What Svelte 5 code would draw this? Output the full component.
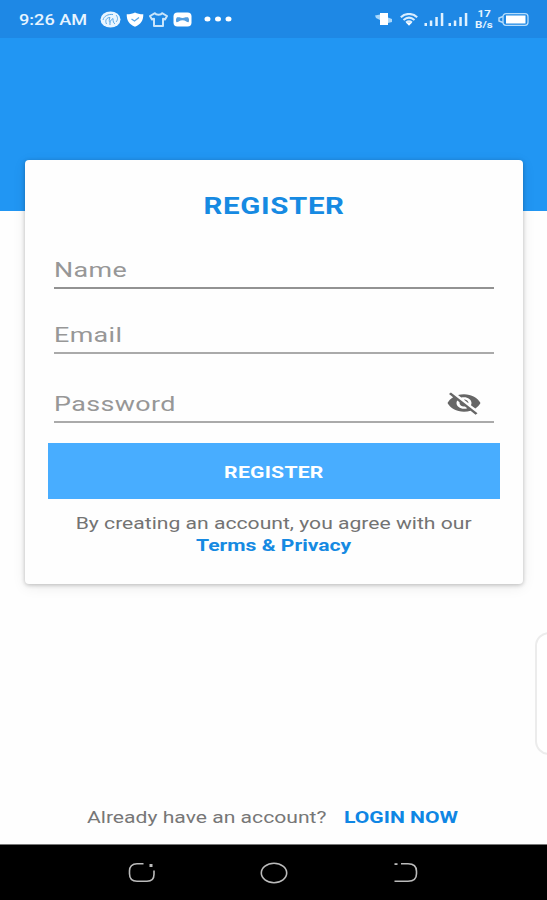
<script lang="ts">
  let name = $state('');
  let email = $state('');
  let password = $state('');
  let showPassword = $state(false);
</script>

<div class="screen">
  <header class="status-bar">
    <div class="status-left">
      <span class="wide time">9:26 AM</span>
      <svg class="swirl" width="21" height="17" viewBox="0 0 21 17">
        <ellipse cx="10.5" cy="8.5" rx="10" ry="8" fill="#e9f5ff" />
        <path d="M3 9C4 5 8 3 13 3.500M6.500 13C4.500 9 7 6.500 10 6.500c-1 2-1 4 0 5M10 14c-.5-3 .5-5 3-6.500 0 3 .5 4.500 2 5.500M16 4c2 2 2 5 0 7" fill="none" stroke="#5aa9e8" stroke-width="1" />
      </svg>
      <svg class="shield" width="18" height="15" viewBox="0 0 18 15">
        <path d="M9 .5c2 1.200 5 1.800 8.300 1.800 0 6-2 10-8.300 12.400C2.700 12.300.7 8.300.7 2.300 4 2.300 7 1.700 9 .5z" fill="#fff" />
        <path d="M5.500 7l3 2L13 5.500" fill="none" stroke="#57a6e8" stroke-width="1.300" />
      </svg>
      <svg class="shirt" width="19" height="15" viewBox="0 0 19 15">
        <path d="M6 1.200C7 3.200 12 3.200 13 1.200L18 4l-2 3.500-2-.7V14H5V6.800l-2 .7L1 4z" fill="none" stroke="#c9e5fb" stroke-width="2" stroke-linejoin="round" />
      </svg>
      <svg class="pad" width="19" height="15" viewBox="0 0 19 15">
        <rect x=".5" y=".5" width="18" height="14" rx="4" fill="#fff" />
        <path d="M4 5.200h2.500c2 1 4 1 6 0H15c1.300 1.300 1.300 4 .5 5-2 0-3-2-6-2s-4 2-6 2c-.8-1-.8-3.700.5-5z" fill="#539ee0" />
      </svg>
      <svg class="dots" width="28" height="6" viewBox="0 0 28 6">
        <ellipse cx="3.500" cy="3" rx="3" ry="2.500" fill="#fff" />
        <ellipse cx="14" cy="3" rx="3" ry="2.500" fill="#fff" />
        <ellipse cx="24.500" cy="3" rx="3" ry="2.500" fill="#fff" />
      </svg>
    </div>
    <div class="status-right">
      <svg class="vibrate" width="18" height="14" viewBox="0 0 18 14">
        <path d="M0 3.500l5-1V8L1 6zM13 5.500l4 1.500v3l-4 1z" fill="#a9d7fb" />
        <rect x="5" y="1" width="8" height="12" fill="#fff" />
      </svg>
      <svg class="wifi" width="18" height="13" viewBox="0 0 18 13">
        <path d="M.8 4.200C5.500-.2 12.500-.2 17.200 4.200M3.500 7c3.500-3 7.500-3 11 0M6 9.500c2-1.500 4-1.500 6 0" fill="none" stroke="#d8edff" stroke-width="2" />
        <path d="M6 9.500h6L9 12.800z" fill="#fff" />
      </svg>
      <svg class="signal" width="20" height="13" viewBox="0 0 20 13">
        <path d="M.5 10h2.500v3H.5zM5.800 7.500h2.500V13H5.800zM11.300 4h2.500v9h-2.500zM16.800 0h2.500v13h-2.500z" fill="#dff1ff" />
      </svg>
      <svg class="signal" width="20" height="13" viewBox="0 0 20 13">
        <path d="M.5 10h2.500v3H.5zM5.800 7.500h2.500V13H5.800zM11.300 4h2.500v9h-2.500zM16.800 0h2.500v13h-2.500z" fill="#dff1ff" />
      </svg>
      <div class="speed">
        <span class="wide">17</span>
        <span class="wide">B/s</span>
      </div>
      <svg class="battery" width="31" height="13" viewBox="0 0 31 13">
        <path d="M5 3.500L1 5v3l4 1.500" fill="none" stroke="#b5dcfb" stroke-width="1.500" />
        <rect x="5" y=".7" width="25" height="11.600" rx="3" fill="none" stroke="#b5dcfb" stroke-width="1.300" />
        <rect x="8" y="2.500" width="19.500" height="8" fill="#fff" />
      </svg>
    </div>
  </header>

  <main>
    <form class="card" onsubmit={(e) => e.preventDefault()}>
      <h1><span class="wide">REGISTER</span></h1>

      <label class="field name">
        <input class="wide" type="text" placeholder="Name" bind:value={name} />
      </label>
      <label class="field email">
        <input class="wide" type="text" placeholder="Email" bind:value={email} />
      </label>
      <div class="field password">
        <input
          class="wide"
          type={showPassword ? 'text' : 'password'}
          placeholder="Password"
          aria-label="Password"
          bind:value={password}
        />
        <button class="eye" type="button" aria-label="Toggle password" onclick={() => (showPassword = !showPassword)}>
          <svg width="36" height="28" viewBox="0 0 24 24" preserveAspectRatio="none">
            <path fill="#666" d="M12 7c2.760 0 5 2.240 5 5 0 .65-.13 1.260-.36 1.830l2.920 2.920c1.510-1.260 2.700-2.890 3.430-4.750-1.730-4.390-6-7.500-11-7.500-1.400 0-2.740.25-3.980.7l2.160 2.160C10.740 7.130 11.350 7 12 7zM2 4.270l2.280 2.280.46.46C3.080 8.300 1.780 10.020 1 12c1.730 4.390 6 7.500 11 7.500 1.550 0 3.030-.3 4.380-.84l.42.42L19.730 22 21 20.730 3.270 3 2 4.270zM7.530 9.800l1.550 1.550c-.05.21-.08.43-.08.65 0 1.660 1.340 3 3 3 .22 0 .44-.03.65-.08l1.550 1.550c-.67.33-1.410.53-2.200.53-2.760 0-5-2.240-5-5 0-.79.2-1.530.53-2.200zm4.310-.78l3.150 3.150.02-.16c0-1.660-1.340-3-3-3l-.17.01z" />
          </svg>
        </button>
      </div>

      <button class="submit" type="submit"><span class="wide">REGISTER</span></button>

      <p class="terms">
        <span class="wide agree">By creating an account, you agree with our</span>
        <span class="wide link">Terms &amp; Privacy</span>
      </p>
    </form>
  </main>

  <div class="edge-panel"></div>

  <p class="login">
    <span class="wide have">Already have an account?</span>
    <span class="wide now">LOGIN NOW</span>
  </p>

  <nav>
    <svg width="28" height="22" viewBox="0 0 28 22">
      <path d="M15.500 1.800H9c-5 0-7.500 3-7.500 7v3c0 5 3 7.500 7.500 7.500h10c5 0 7-3 7-7V8.500" fill="none" stroke="#bbb" stroke-width="1.600" />
      <rect x="21.500" y="2" width="3" height="3" fill="#bbb" />
    </svg>
    <svg width="28" height="22" viewBox="0 0 28 22">
      <ellipse cx="14" cy="11" rx="12.700" ry="9.700" fill="none" stroke="#bbb" stroke-width="1.600" />
    </svg>
    <svg width="28" height="22" viewBox="0 0 28 22">
      <path d="M9 1.800h7c6 0 8.500 3.500 8.500 7.500v2.500c0 5-3 7.500-8.500 7.500H2.500" fill="none" stroke="#bbb" stroke-width="1.600" />
      <rect x="2.500" y="1.200" width="3" height="1.800" fill="#bbb" />
    </svg>
  </nav>
</div>

<style>
  :global(body) {
    margin: 0;
    background: #fefefe;
  }

  .screen {
    position: relative;
    display: flex;
    flex-direction: column;
    width: 547px;
    height: 900px;
    overflow: hidden;
    box-sizing: border-box;
    font-family: Roboto, sans-serif;
    background: linear-gradient(#2196f3 211px, #fefefe 211px);
  }

  /* the type is set wider than Roboto's natural width */
  .wide {
    display: inline-block;
    flex: none;
    white-space: nowrap;
    transform: scaleX(1.28);
  }

  .status-bar {
    display: flex;
    justify-content: space-between;
    height: 38px;
    padding: 0 18px 0 19px;
    background: #1e88e5;
    color: #e6f4ff;
  }

  .status-left,
  .status-right {
    display: flex;
    align-items: center;
  }

  .time {
    width: 81px;
    padding-top: 4px;
    font-size: 14.5px;
    font-weight: 500;
    line-height: 34px;
    transform: scaleX(1.25);
    transform-origin: left;
  }

  .shield,
  .shirt,
  .pad {
    margin-left: 5px;
  }

  .dots {
    margin-left: 12px;
  }

  .wifi {
    margin-left: 7px;
  }

  .signal {
    margin: 0 0 0 6px;
  }

  .signal + .signal {
    margin-left: 4px;
  }

  .speed {
    display: flex;
    flex-direction: column;
    align-items: center;
    width: 20px;
    margin: 1px 4px 0 6px;
    font-size: 9px;
    font-weight: 700;
    line-height: 10.5px;
  }

  main {
    padding: 122px 24px 0 25px;
  }

  .card {
    display: flex;
    flex-direction: column;
    height: 424px;
    box-sizing: border-box;
    padding: 0 23px;
    border-radius: 4px;
    background: #fefefe;
    box-shadow: 0 1px 4px rgba(0, 0, 0, 0.24), 0 3px 14px rgba(0, 0, 0, 0.08);
  }

  h1 {
    margin: 31px 0 0;
    font-size: 23px;
    font-weight: 700;
    letter-spacing: 0.5px;
    line-height: 32px;
    text-align: center;
    color: #168ae2;
  }

  .field {
    display: flex;
    justify-content: space-between;
    align-items: center;
    height: 36px;
    margin: 0 6px;
    border-bottom: 2px solid #aaa;
  }

  .name {
    margin-top: 28px;
    border-color: #929292;
  }

  .email {
    margin-top: 27px;
  }

  .password {
    margin-top: 31px;
  }

  input {
    width: 260px;
    height: 34px;
    padding: 2px 0 0;
    box-sizing: border-box;
    border: none;
    outline: none;
    background: none;
    font: 400 21px Roboto, sans-serif;
    letter-spacing: 0.3px;
    color: #444;
    transform-origin: left;
  }

  .password input {
    padding-top: 1px;
  }

  input::placeholder {
    color: #979797;
    opacity: 1;
  }

  .eye {
    display: flex;
    margin: 0 12px 0 0;
    padding: 0;
    border: none;
    background: none;
    cursor: pointer;
  }

  .submit {
    flex: none;
    height: 56px;
    margin-top: 20px;
    padding: 2px 0 0;
    border: none;
    background: #48adff;
    color: #fff;
    font: 700 16.5px Roboto, sans-serif;
    letter-spacing: 0.2px;
    cursor: pointer;
  }

  .terms {
    display: flex;
    flex-direction: column;
    align-items: center;
    margin: 14px 0 0;
    font-size: 16.5px;
    line-height: 22px;
    color: #737373;
  }

  .link {
    font-weight: 700;
    color: #168ae2;
  }

  /* system side panel handle peeking in from the right */
  .edge-panel {
    position: absolute;
    top: 632px;
    left: 535px;
    width: 40px;
    height: 119px;
    border: 2px solid #ececec;
    border-radius: 14px;
    background: #fff;
  }

  .login {
    display: flex;
    margin: auto 0 15px 87px;
    font-size: 16.5px;
    line-height: 22px;
    color: #777;
  }

  .have,
  .now {
    transform-origin: left;
  }

  .have {
    width: 257px;
  }

  .now {
    font-weight: 700;
    color: #0f86e4;
  }

  nav {
    display: flex;
    justify-content: center;
    align-items: center;
    gap: 104px;
    height: 55px;
    background: #000;
    border-top: 1px solid #777;
    box-sizing: content-box;
  }
</style>
